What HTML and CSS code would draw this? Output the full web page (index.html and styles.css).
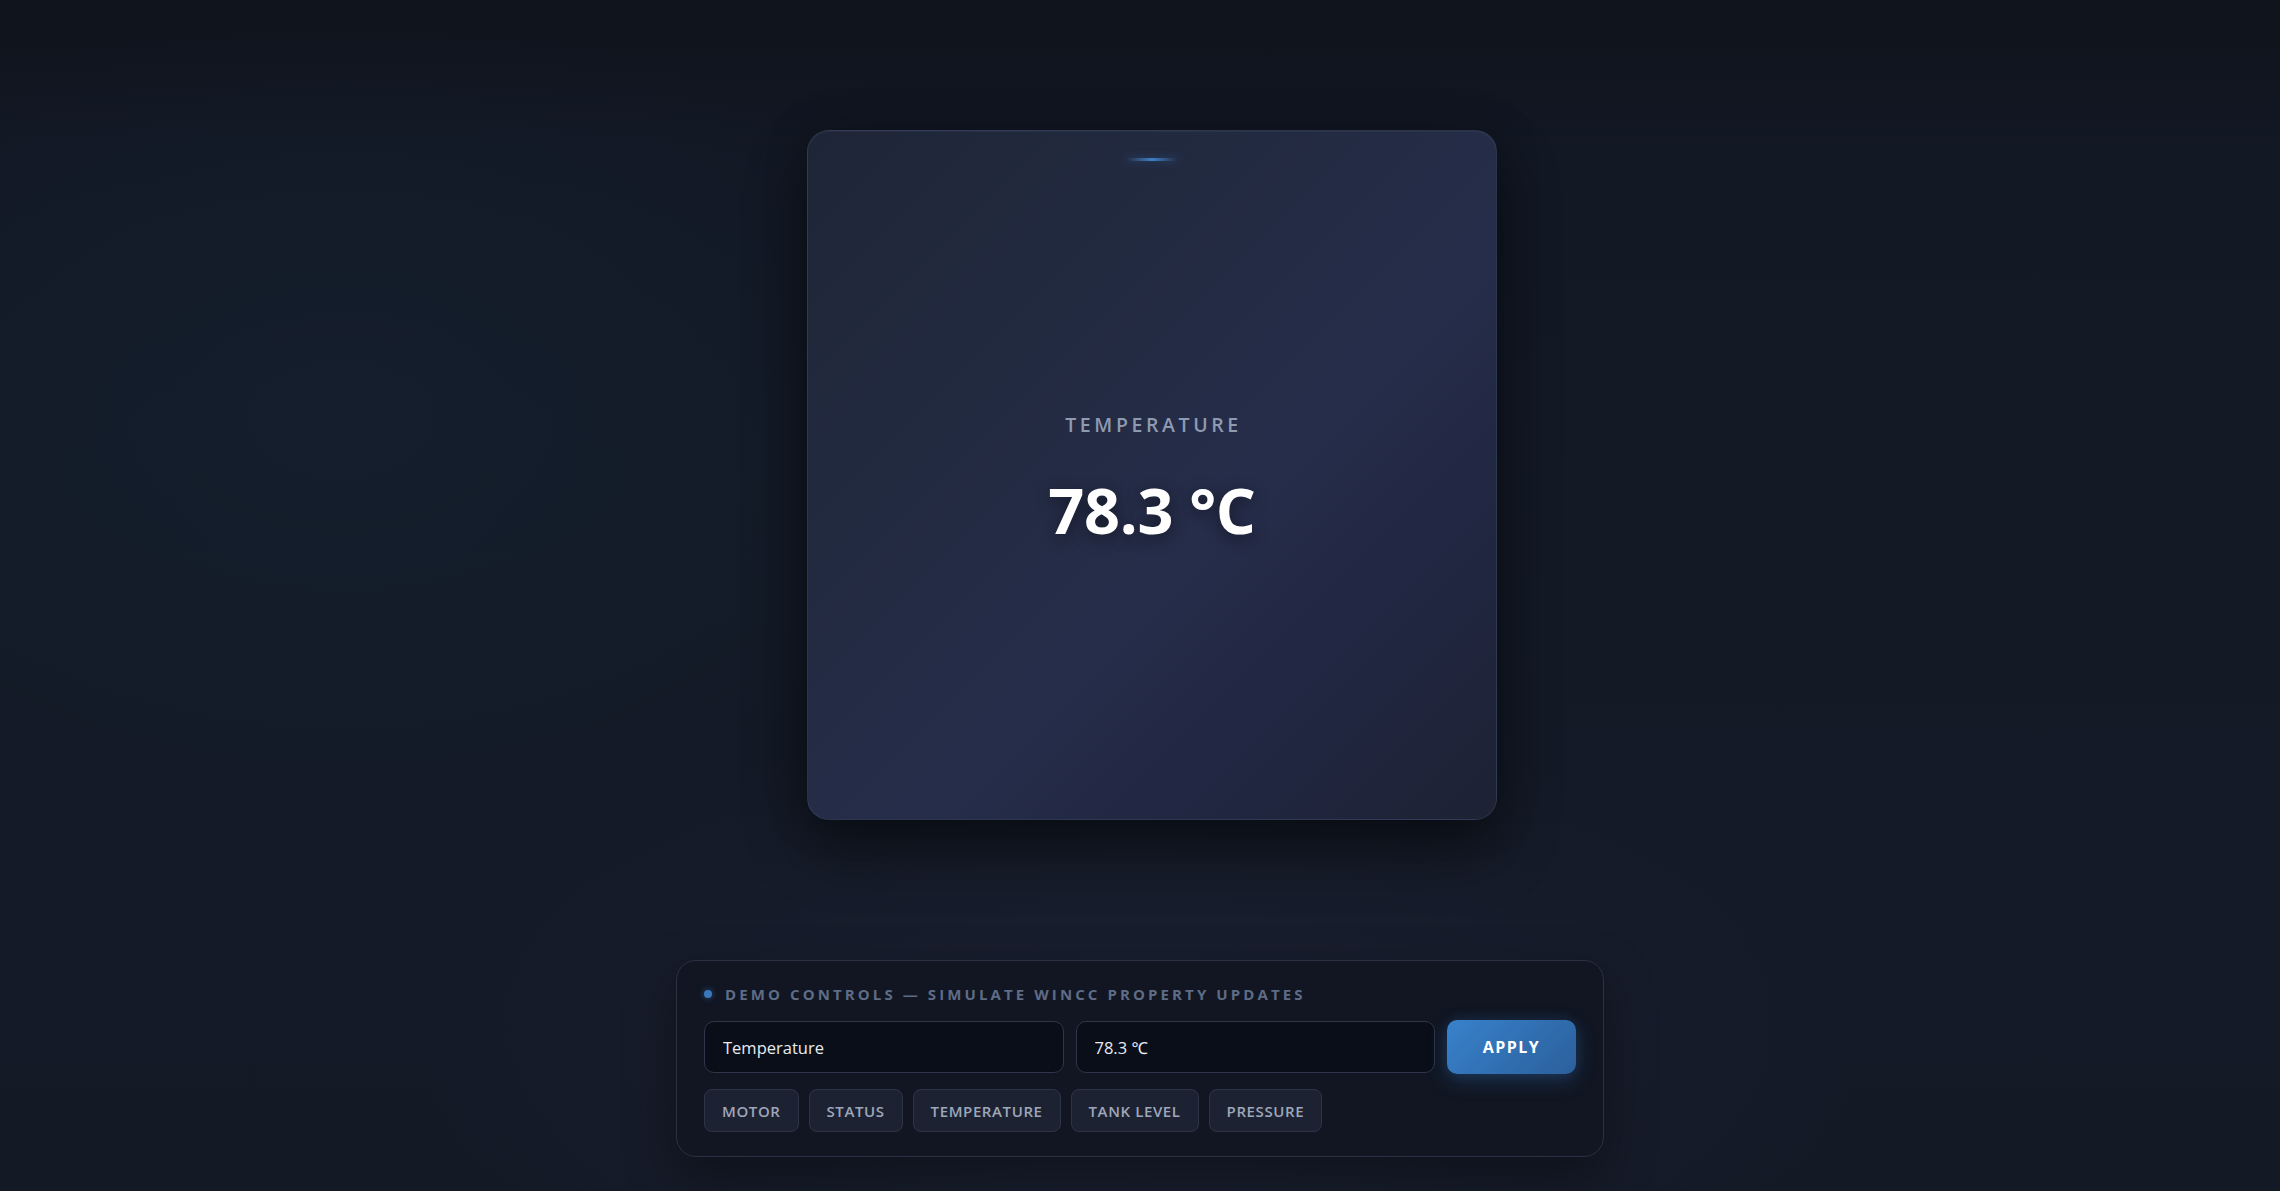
FILE: index.html
```html
<!DOCTYPE html>
<html lang="en">
<head>
<meta charset="utf-8">
<title>WinCC Tile Demo</title>
<link rel="stylesheet" href="styles.css">
</head>
<body>
  <main class="stage">
    <section class="tile">
      <span class="tile-accent"></span>
      <div class="tile-label">TEMPERATURE</div>
      <div class="tile-value">78.3 °C</div>
    </section>

    <section class="controls">
      <div class="controls-title"><span class="dot"></span>DEMO CONTROLS — SIMULATE WINCC PROPERTY UPDATES</div>
      <div class="controls-row">
        <input class="field" type="text" value="Temperature">
        <input class="field" type="text" value="78.3 ℃">
        <button class="apply" type="button">APPLY</button>
      </div>
      <div class="chips">
        <button class="chip" type="button">MOTOR</button>
        <button class="chip" type="button">STATUS</button>
        <button class="chip" type="button">TEMPERATURE</button>
        <button class="chip" type="button">TANK LEVEL</button>
        <button class="chip" type="button">PRESSURE</button>
      </div>
    </section>
  </main>
</body>
</html>
```

FILE: styles.css
```css
* { box-sizing: border-box; }

html, body {
  margin: 0;
  height: 100%;
}

body {
  font-family: "Open Sans", "Noto Sans", "DejaVu Sans", sans-serif;
  color: #e6e9f0;
  overflow: hidden;
  background:
    radial-gradient(ellipse 45% 40% at 50% 88%, rgba(30, 36, 56, 0.6) 0%, rgba(30, 36, 56, 0) 70%),
    radial-gradient(ellipse 40% 50% at 15% 35%, rgba(22, 34, 50, 0.6) 0%, rgba(22, 34, 50, 0) 70%),
    linear-gradient(180deg, #0f131b 0%, #121824 12%, #131a26 50%, #141926 100%);
}

.stage {
  height: 100%;
  display: flex;
  flex-direction: column;
  align-items: center;
  padding-top: 130px;
}

.tile {
  position: relative;
  width: 690px;
  height: 690px;
  margin-left: 24px;
  border-radius: 22px;
  border: 1px solid rgba(120, 135, 170, 0.16);
  background: linear-gradient(135deg, #1e2537 0%, #222a40 30%, #262d4a 58%, #202640 80%, #1d2234 100%);
  box-shadow:
    0 30px 60px rgba(0, 0, 0, 0.45),
    0 0 40px rgba(0, 0, 0, 0.25),
    inset 0 1px 0 rgba(255, 255, 255, 0.04);
  display: flex;
  flex-direction: column;
  align-items: center;
  justify-content: center;
  gap: 38px;
  padding-top: 10px;
}

.tile-accent {
  position: absolute;
  top: 27px;
  left: 50%;
  width: 52px;
  height: 3px;
  margin-left: -26px;
  border-radius: 2px;
  background: linear-gradient(90deg, rgba(59, 125, 196, 0) 0%, #3f80c6 50%, rgba(59, 125, 196, 0) 100%);
  box-shadow: 0 0 8px rgba(63, 128, 198, 0.35);
}

.tile-label {
  font-size: 19.5px;
  font-weight: 600;
  letter-spacing: 3.6px;
  color: #8e9ab2;
  line-height: 1.2;
  padding-left: 3px;
}

.tile-value {
  font-size: 63px;
  font-weight: 700;
  color: #ffffff;
  line-height: 1.15;
  letter-spacing: -0.3px;
  text-shadow: 0 4px 16px rgba(0, 0, 0, 0.45);
}

.controls {
  width: 928px;
  margin-top: 140px;
  border-radius: 20px;
  border: 1px solid #2a3142;
  background: #111622;
  box-shadow: 0 20px 50px rgba(0, 0, 0, 0.35);
  padding: 23px 27px 24px;
}

.controls-title {
  display: flex;
  align-items: center;
  font-size: 15px;
  font-weight: 700;
  letter-spacing: 3.1px;
  color: #5e6c86;
  line-height: 20px;
}

.dot {
  width: 8px;
  height: 8px;
  border-radius: 50%;
  background: #3a78bd;
  box-shadow: 0 0 6px rgba(58, 120, 189, 0.6);
  margin-right: 13px;
}

.controls-row {
  display: grid;
  grid-template-columns: 1fr 1fr 129px;
  gap: 12px;
  margin-top: 16px;
  align-items: center;
}

.field {
  height: 52px;
  width: 100%;
  border-radius: 10px;
  border: 1px solid #2f3649;
  background: #0a0e18;
  color: #e8ebf2;
  font-family: "Open Sans", "Noto Sans", "DejaVu Sans", sans-serif;
  font-size: 16.5px;
  padding: 0 18px;
  outline: none;
}

.apply {
  height: 54px;
  border: none;
  border-radius: 10px;
  background: linear-gradient(135deg, #3882cc 0%, #3170b3 50%, #2c609c 100%);
  color: #ffffff;
  font-family: "Open Sans", "Noto Sans", sans-serif;
  font-size: 16px;
  font-weight: 700;
  letter-spacing: 1.5px;
  box-shadow: 0 6px 20px rgba(50, 115, 190, 0.3), 0 0 14px rgba(50, 115, 190, 0.15);
  cursor: pointer;
}

.chips {
  display: flex;
  gap: 10px;
  margin-top: 15px;
}

.chip {
  height: 43px;
  padding: 0 17px;
  border-radius: 8px;
  border: 1px solid #2e3447;
  background: #1d2233;
  color: #9ea7b9;
  font-family: "Open Sans", "Noto Sans", sans-serif;
  font-size: 15px;
  font-weight: 600;
  letter-spacing: 0.6px;
  cursor: pointer;
}
```
